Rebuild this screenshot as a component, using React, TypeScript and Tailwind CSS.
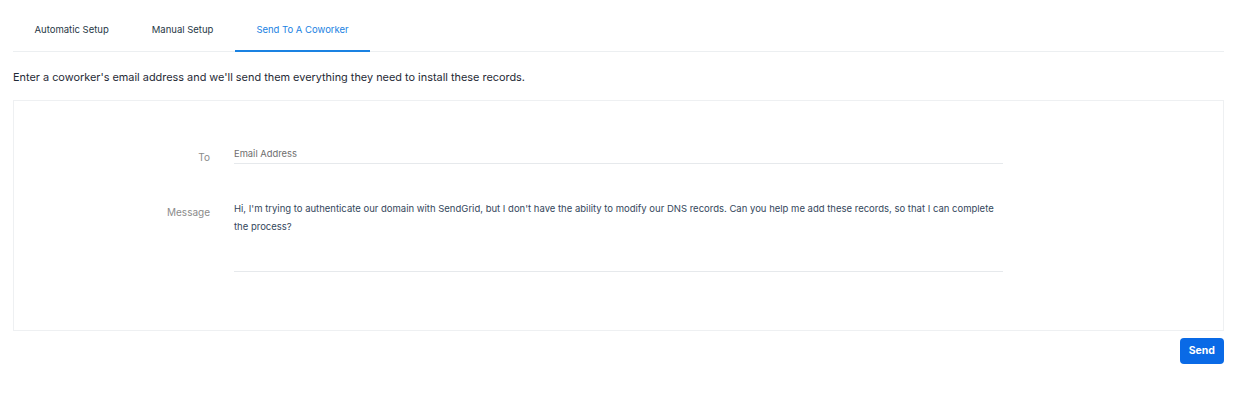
import { useState } from "react";

const tabs = ["Automatic Setup", "Manual Setup", "Send To A Coworker"];

export default function App() {
  const [active, setActive] = useState(2);

  return (
    <div className="min-h-[418px] w-full bg-white pl-[13px] pr-[24px] font-['Inter','Liberation_Sans',sans-serif] text-[#263746]">
      <div className="flex border-b border-[#eceff1]">
        {tabs.map((t, i) => (
          <button
            key={t}
            onClick={() => setActive(i)}
            className={
              "-mb-px flex h-[52px] items-start px-[21.5px] pt-[23px] text-[9.5px] leading-[14px] " +
              (i === active
                ? "border-b-2 border-[#1a82e2] text-[#1a82e2]"
                : "border-b-2 border-transparent text-[#263746]")
            }
          >
            {t}
          </button>
        ))}
      </div>

      <p className="mt-[17px] text-[10.9px] leading-[16px] text-[#1f2a36]">
        Enter a coworker's email address and we'll send them everything they need to install these records.
      </p>

      <div className="mt-[15px] h-[231px] border border-[#eef0f2] pt-[46px]">
        <div className="flex">
          <div className="w-[196px] pt-[3px] text-right text-[10px] leading-[14px] text-[#8b8b8b]">To</div>
          <div className="ml-[24px] w-[769px] border-b border-[#e6e9ec] text-[9.4px] leading-[14px] text-[#6e6e6e]">
            Email Address
          </div>
        </div>
        <div className="mt-[36px] flex">
          <div className="w-[196px] pt-[5px] text-right text-[10px] leading-[14px] text-[#8b8b8b]">Message</div>
          <div className="ml-[24px] h-[72px] w-[769px] border-b border-[#e6e9ec] text-[9.5px] leading-[18px] text-[#34475c]">
            Hi, I'm trying to authenticate our domain with SendGrid, but I don't have the ability to modify our DNS records. Can you help me add these records, so that I can complete the process?
          </div>
        </div>
      </div>

      <div className="mt-[7px] flex justify-end">
        <button className="h-[26px] rounded-[4px] bg-[#0a6ae6] px-[9px] text-[10.5px] font-bold text-white">
          Send
        </button>
      </div>
    </div>
  );
}
